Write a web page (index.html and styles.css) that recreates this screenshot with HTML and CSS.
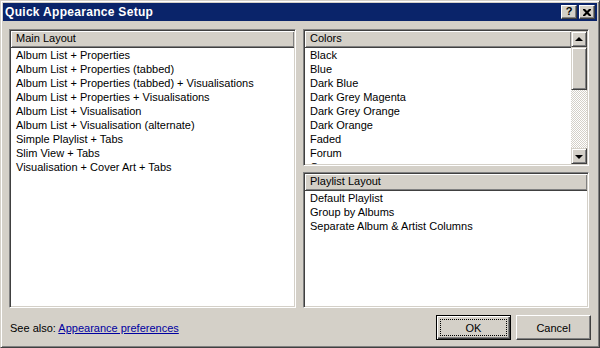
FILE: index.html
```html
<!DOCTYPE html>
<html lang="en">
  <head>
    <meta charset="UTF-8" />
    <title>Quick Appearance Setup</title>
    <link rel="stylesheet" href="styles.css">
  </head>
  <body>
    <div class="window">
      <div class="titlebar">
        <span class="title">Quick Appearance Setup</span>
        <div class="title-buttons">
          <span class="tbtn help">?</span>
          <span class="tbtn close">
            <svg width="8" height="7" viewBox="0 0 8 7">
              <path d="M0 0h2l2 2 2-2h2v1l-2.5 2.5L8 6v1H6L4 5 2 7H0V6l2.5-2.5L0 1z" fill="#000" />
            </svg>
          </span>
        </div>
      </div>
      <div class="content">
        <div class="panes">
          <div class="list main-list">
            <div class="list-body">
              <div class="list-header">Main Layout</div>
              <div class="item">Album List + Properties</div>
              <div class="item">Album List + Properties (tabbed)</div>
              <div class="item">Album List + Properties (tabbed) + Visualisations</div>
              <div class="item">Album List + Properties + Visualisations</div>
              <div class="item">Album List + Visualisation</div>
              <div class="item">Album List + Visualisation (alternate)</div>
              <div class="item">Simple Playlist + Tabs</div>
              <div class="item">Slim View + Tabs</div>
              <div class="item">Visualisation + Cover Art + Tabs</div>
            </div>
          </div>
          <div class="right-col">
            <div class="list colors-list">
              <div class="list-body">
                <div class="list-header">Colors</div>
                <div class="item">Black</div>
                <div class="item">Blue</div>
                <div class="item">Dark Blue</div>
                <div class="item">Dark Grey Magenta</div>
                <div class="item">Dark Grey Orange</div>
                <div class="item">Dark Orange</div>
                <div class="item">Faded</div>
                <div class="item">Forum</div>
                <div class="item">Grey</div>
              </div>
              <div class="scrollbar">
                <div class="sb-btn"><span class="arrow up"></span></div>
                <div class="sb-thumb"></div>
                <div class="sb-track"></div>
                <div class="sb-btn"><span class="arrow down"></span></div>
              </div>
            </div>
            <div class="list playlist-list">
              <div class="list-body">
                <div class="list-header">Playlist Layout</div>
                <div class="item">Default Playlist</div>
                <div class="item">Group by Albums</div>
                <div class="item">Separate Album &amp; Artist Columns</div>
              </div>
            </div>
          </div>
        </div>
        <div class="footer">
          <span class="see-also">See also: <a href="#" class="link">Appearance preferences</a></span>
          <div class="buttons">
            <button class="btn default"><span class="focus">OK</span></button>
            <button class="btn">Cancel</button>
          </div>
        </div>
      </div>
    </div>
  </body>
</html>
```

FILE: styles.css
```css
body {
  margin: 0;
  font-family: "Liberation Sans", Arial, sans-serif;
  font-size: 11px;
  color: #000;
}

.window {
  box-sizing: border-box;
  width: 600px;
  height: 348px;
  background: #d4d0c8;
  border: 1px solid;
  border-color: #d4d0c8 #404040 #404040 #d4d0c8;
  box-shadow: inset 1px 1px #fff, inset -1px -1px #808080;
  padding: 1px;
  display: flex;
  flex-direction: column;
}

.titlebar {
  height: 18px;
  margin: 1px 1px 0 1px;
  background: #0a246a;
  display: flex;
  align-items: center;
  justify-content: space-between;
  padding: 0 2px 0 2px;
}
.title {
  color: #fff;
  font-weight: 700;
  font-size: 12px;
  letter-spacing: 0.3px;
}
.title-buttons {
  display: flex;
  gap: 2px;
}
.tbtn {
  box-sizing: border-box;
  width: 16px;
  height: 14px;
  background: #d4d0c8;
  border: 1px solid;
  border-color: #fff #404040 #404040 #fff;
  box-shadow: inset -1px -1px #808080;
  display: flex;
  align-items: center;
  justify-content: center;
}
.tbtn.help {
  font-weight: 700;
  font-size: 11px;
  line-height: 1;
  padding-bottom: 1px;
}

.content {
  flex: 1;
  display: flex;
  flex-direction: column;
  padding: 8px 6px 0 7px;
}
.panes {
  height: 279px;
  display: flex;
  gap: 7px;
}
.right-col {
  width: 286px;
  display: flex;
  flex-direction: column;
  gap: 6px;
}

.list {
  box-sizing: border-box;
  background: #fff;
  border: 1px solid;
  border-color: #808080 #fff #fff #808080;
  box-shadow: inset 1px 1px #404040, inset -1px -1px #d4d0c8;
  padding: 1px;
  display: flex;
  overflow: hidden;
}
.main-list {
  width: 287px;
}
.colors-list {
  height: 137px;
}
.playlist-list {
  flex: 1;
}
.list-body {
  flex: 1;
  overflow: hidden;
}
.list-header {
  box-sizing: border-box;
  height: 17px;
  line-height: 15px;
  padding-left: 5px;
  background: #d4d0c8;
  border-bottom: 1px solid #404040;
  box-shadow: inset 1px 1px #fff, inset -1px -1px #808080;
}
.item {
  height: 14px;
  line-height: 14px;
  padding-left: 5px;
  white-space: nowrap;
}

.scrollbar {
  width: 16px;
  display: flex;
  flex-direction: column;
}
.sb-btn,
.sb-thumb {
  box-sizing: border-box;
  background: #d4d0c8;
  border: 1px solid;
  border-color: #d4d0c8 #404040 #404040 #d4d0c8;
  box-shadow: inset 1px 1px #fff, inset -1px -1px #808080;
}
.sb-btn {
  height: 16px;
  display: flex;
  align-items: center;
  justify-content: center;
}
.sb-thumb {
  height: 43px;
}
.sb-track {
  flex: 1;
  background: repeating-conic-gradient(#d4d0c8 0 25%, #fff 0 50%);
  background-size: 2px 2px;
}
.arrow {
  width: 0;
  height: 0;
  border-left: 4px solid transparent;
  border-right: 4px solid transparent;
}
.arrow.up {
  border-bottom: 4px solid #000;
  margin-bottom: 1px;
}
.arrow.down {
  border-top: 4px solid #000;
  margin-top: 1px;
}

.footer {
  flex: 1;
  display: flex;
  justify-content: space-between;
  align-items: flex-start;
  padding-top: 7px;
}
.see-also {
  margin-top: 7px;
  margin-left: 1px;
}
.link {
  color: #0000a0;
}
.buttons {
  display: flex;
  gap: 5px;
  margin-right: 1px;
}
.btn {
  box-sizing: border-box;
  width: 75px;
  height: 25px;
  font-family: "Liberation Sans", Arial, sans-serif;
  font-size: 11px;
  color: #000;
  background: #d4d0c8;
  border: 1px solid;
  border-color: #fff #404040 #404040 #fff;
  box-shadow: inset -1px -1px #808080;
  padding: 0;
}
.btn.default {
  border: 1px solid #000;
  box-shadow: inset 1px 1px #fff, inset -1px -1px #404040, inset -2px -2px #808080;
  padding: 3px;
  display: flex;
}
.focus {
  flex: 1;
  border: 1px dotted #000;
  display: flex;
  align-items: center;
  justify-content: center;
}
```
